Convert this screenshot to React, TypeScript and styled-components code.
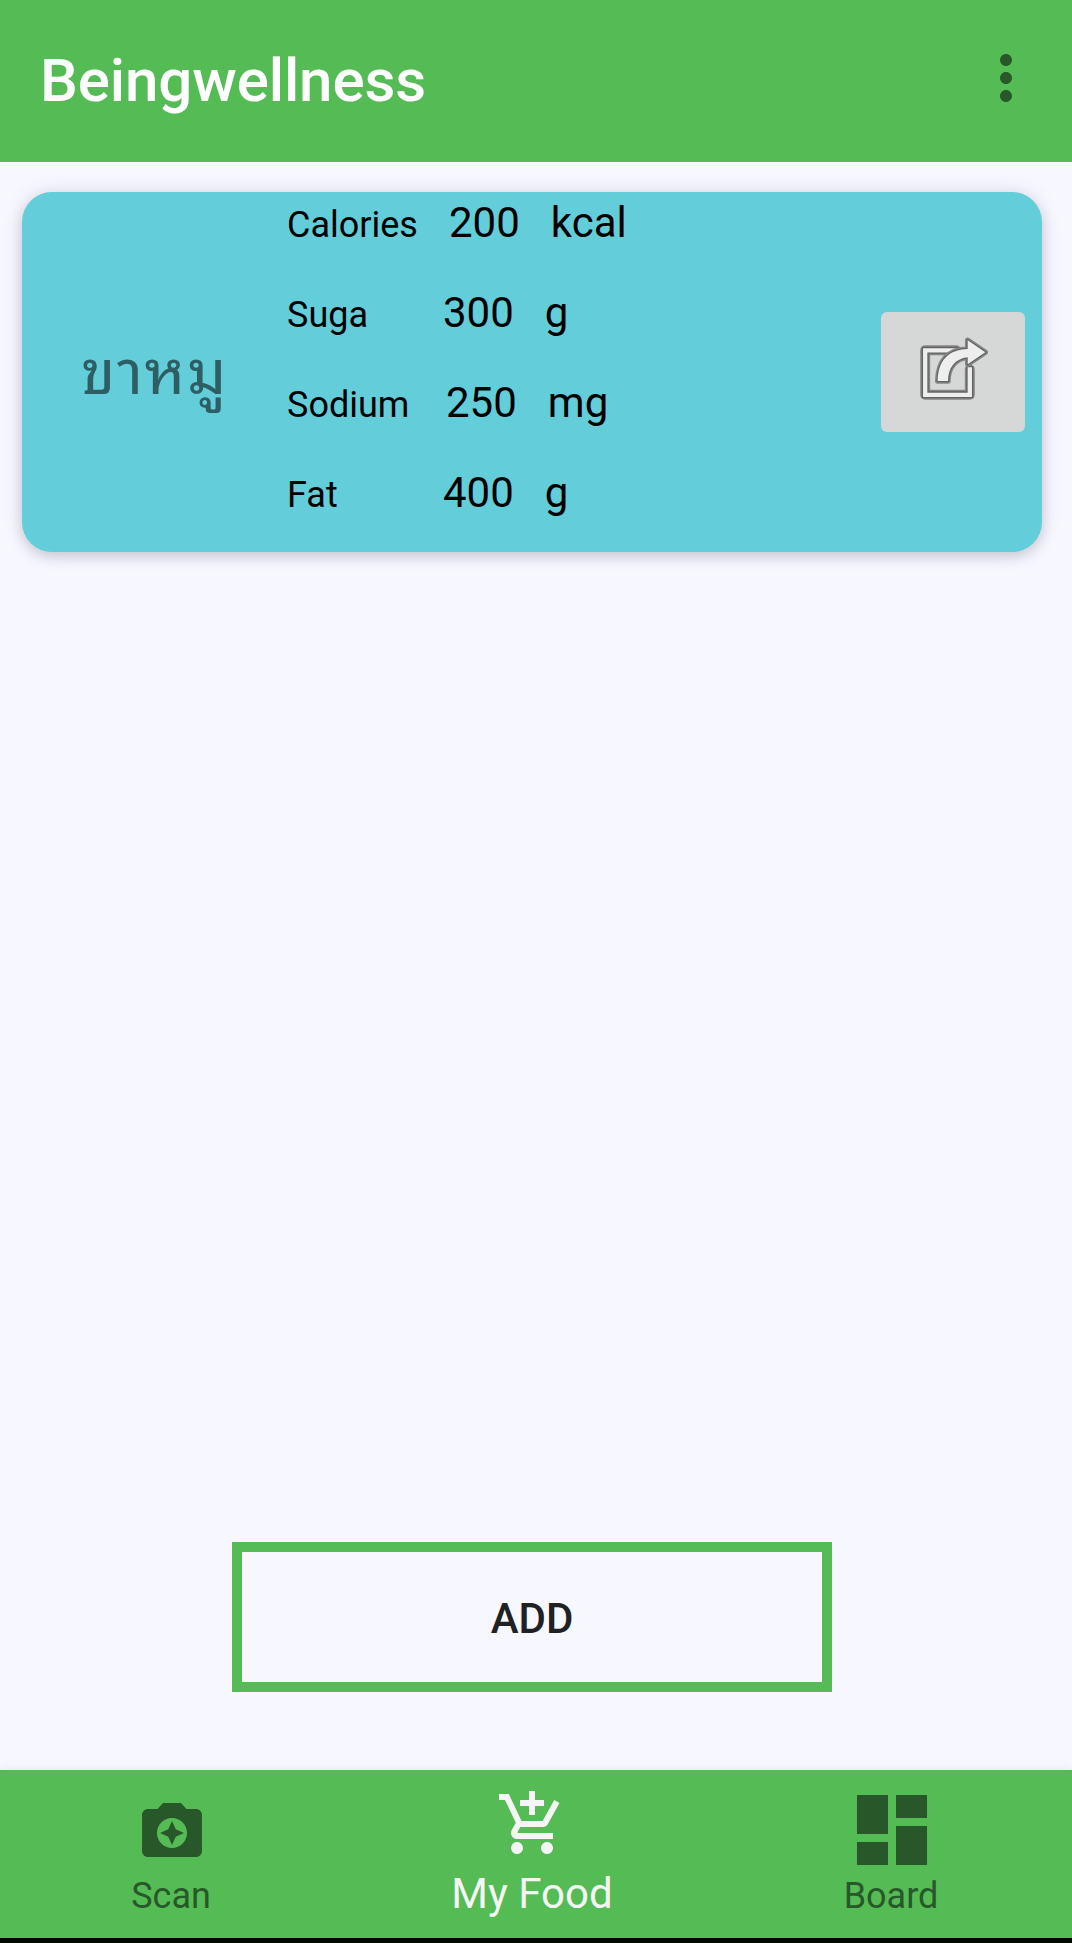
import React from "react";
import styled, { createGlobalStyle } from "styled-components";
import { MdAddShoppingCart, MdCameraEnhance, MdMoreVert } from "react-icons/md";

const GlobalStyle = createGlobalStyle`
  *, *::before, *::after { box-sizing: border-box; }
  body { margin: 0; background: #f6f7ff; }
  button { font: inherit; border: 0; padding: 0; margin: 0; background: none; color: inherit; }
`;

const Screen = styled.div`
  display: flex;
  flex-direction: column;
  height: 1943px;
  overflow: hidden;
  background: #f6f7ff;
  font-family: Roboto, "Noto Sans", sans-serif;
`;

const AppBar = styled.header`
  display: flex;
  justify-content: space-between;
  align-items: flex-start;
  height: 162px;
  padding: 42px 30px 0 40px;
  background: #55bc55;
`;

const Title = styled.h1`
  margin: 3px 0 0;
  font-size: 60px;
  font-weight: 500;
  line-height: 72px;
  letter-spacing: -0.1px;
  color: #ffffff;
`;

const MenuButton = styled.button`
  display: flex;
  color: #285829;
`;

const Main = styled.main`
  flex: 1;
  display: flex;
  flex-direction: column;
  align-items: flex-start;
  padding: 30px 30px 78px 22px;
`;

const FoodCard = styled.article`
  display: flex;
  align-items: stretch;
  width: 1020px;
  height: 360px;
  padding-right: 17px;
  border-radius: 30px;
  background: #63cdda;
  box-shadow: 0 5px 14px rgba(0, 0, 0, 0.14), 0 0 22px rgba(0, 0, 0, 0.09);
`;

const FoodName = styled.div`
  width: 265px;
  padding: 138px 0 0 59px;
  font-family: "Noto Looped Thai", "Noto Sans Thai Looped", Loma, Garuda, Waree, Umpush, Roboto, sans-serif;
  font-size: 62px;
  line-height: 72px;
  letter-spacing: 1.5px;
  color: #2d5e63;
  white-space: nowrap;
`;

const Facts = styled.dl`
  flex: 1;
  margin: 0;
  padding-top: 1px;
`;

const Fact = styled.div`
  display: flex;
  align-items: baseline;
  height: 90px;
  line-height: 60px;
  color: #000000;
`;

const FactLabel = styled.dt<{ $width: number }>`
  width: ${({ $width }) => $width}px;
  font-size: 36px;
`;

const FactValue = styled.dd`
  display: flex;
  gap: 31px;
  margin: 0;
  font-size: 42px;
`;

const ShareButton = styled.button`
  display: flex;
  align-items: center;
  justify-content: center;
  align-self: center;
  width: 144px;
  height: 120px;
  border-radius: 6px;
  background: #d6d8d7;
`;

const AddButton = styled.button`
  width: 600px;
  height: 150px;
  margin: auto 0 0 210px;
  padding-top: 2px;
  border: 10px solid #55bc55;
  font-size: 42px;
  font-weight: 500;
  color: #202123;
`;

const NavBar = styled.nav`
  position: relative;
  display: flex;
  justify-content: space-between;
  height: 168px;
  padding: 0 68px 0 60px;
  background: #55bc55;
  box-shadow: 0 0 10px rgba(0, 0, 0, 0.08);
`;

const NavItem = styled.button<{ $active?: boolean; $top: number }>`
  display: flex;
  flex-direction: column;
  align-items: center;
  justify-content: space-between;
  width: ${({ $active }) => ($active ? 240 : 224)}px;
  padding: ${({ $top }) => $top}px 0 17px;
  font-size: ${({ $active }) => ($active ? 42 : 36)}px;
  color: ${({ $active }) => ($active ? "#f5f5f5" : "#285829")};
`;

const NavLabel = styled.span<{ $active?: boolean }>`
  margin-right: ${({ $active }) => ($active ? 0 : 2)}px;
  line-height: ${({ $active }) => ($active ? 54 : 50)}px;
`;

const SystemBar = styled.div`
  height: 5px;
  background: #000000;
`;

const framePath = "M75 38.300H44.200V82.800H88.800V57.500";
const arrowPath =
  "M56.700 69C57 49 67 37.500 86.700 37V28.300L104.300 40.200L86.700 52.300V45.300C74 46.500 67 56 67 69Z";

const ShareIcon = () => (
  <svg width="144" height="120" viewBox="0 0 144 120" fill="none">
    <path d={framePath} stroke="#858785" strokeWidth="10" strokeLinejoin="round" strokeLinecap="round" />
    <path d={framePath} stroke="#626362" strokeWidth="7" strokeLinecap="square" />
    <path d={framePath} stroke="#eeeeee" strokeWidth="4.300" strokeLinecap="square" />
    <path d={arrowPath} fill="#858785" stroke="#858785" strokeWidth="5.500" strokeLinejoin="round" />
    <path d={arrowPath} fill="#626362" stroke="#626362" strokeWidth="2.500" strokeLinejoin="round" />
    <path d={arrowPath} fill="#eeeeee" />
  </svg>
);

const BoardIcon = () => (
  <svg width="70" height="70" viewBox="0 0 70 70" fill="currentColor">
    <path d="M0 0H31V39H0ZM39 0H70V23H39ZM0 47H31V70H0ZM39 31H70V70H39Z" />
  </svg>
);

const facts = [
  { label: "Calories", value: "200", unit: "kcal", width: 162 },
  { label: "Suga", value: "300", unit: "g", width: 156 },
  { label: "Sodium", value: "250", unit: "mg", width: 159 },
  { label: "Fat", value: "400", unit: "g", width: 156 },
];

export default function App() {
  return (
    <Screen>
      <GlobalStyle />
      <AppBar>
        <Title>Beingwellness</Title>
        <MenuButton aria-label="More options">
          <MdMoreVert size={72} />
        </MenuButton>
      </AppBar>
      <Main>
        <FoodCard>
          <FoodName lang="th">ขาหมู</FoodName>
          <Facts>
            {facts.map((fact) => (
              <Fact key={fact.label}>
                <FactLabel $width={fact.width}>{fact.label}</FactLabel>
                <FactValue>
                  <span>{fact.value}</span>
                  <span>{fact.unit}</span>
                </FactValue>
              </Fact>
            ))}
          </Facts>
          <ShareButton aria-label="Share">
            <ShareIcon />
          </ShareButton>
        </FoodCard>
        <AddButton>ADD</AddButton>
      </Main>
      <NavBar>
        <NavItem $top={24}>
          <MdCameraEnhance size={72} />
          <NavLabel>Scan</NavLabel>
        </NavItem>
        <NavItem $active $top={18}>
          <MdAddShoppingCart size={72} />
          <NavLabel $active>My Food</NavLabel>
        </NavItem>
        <NavItem $top={25}>
          <BoardIcon />
          <NavLabel>Board</NavLabel>
        </NavItem>
      </NavBar>
      <SystemBar />
    </Screen>
  );
}
